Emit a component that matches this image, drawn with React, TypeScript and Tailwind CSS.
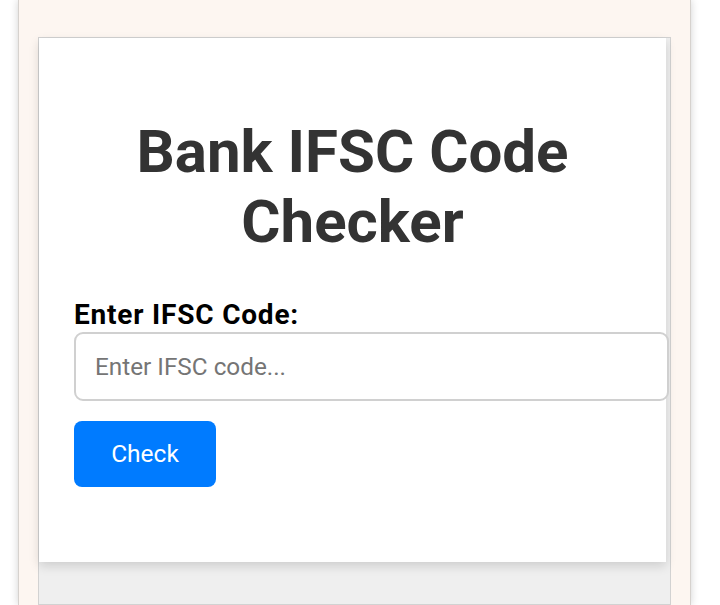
import { useState } from 'react';

export default function App() {
  const [code, setCode] = useState('');

  return (
    <div className="min-h-[605px] bg-white pl-[18px] font-['Roboto','Liberation_Sans',sans-serif]">
      <div className="flex min-h-[605px] w-[673px] flex-col border-x border-[#d6d2ce] bg-[#fdf6f1] pl-[19px] pt-[37px] shadow-[0_0_8px_rgba(0,0,0,0.18)]">
        <div className="flex-1 w-[633px] border border-[#d2d2d2] bg-[#efefef]">
          <div className="w-[627px] bg-white px-[35px] pt-[79px] pb-[75px] shadow-[0_4px_10px_rgba(0,0,0,0.14)]">
            <h1 className="text-center text-[60px] font-bold leading-[70px] text-[#333333]">
              Bank IFSC Code Checker
            </h1>
            <label className="mt-[43px] block text-[28px] font-bold leading-[30px] tracking-[0.8px] text-black">
              Enter IFSC Code:
            </label>
            <input
              value={code}
              onChange={(e) => setCode(e.target.value)}
              placeholder="Enter IFSC code..."
              className="mt-[2px] block h-[69px] w-[595px] rounded-[9px] border-2 border-[#d0d0d0] bg-white pl-[19px] pr-[20px] text-[24.3px] text-[#333] outline-none placeholder:text-[#757575]"
            />
            <button className="mt-[20px] block h-[66px] w-[142px] rounded-[8px] bg-[#007bff] text-[24.5px] text-white">
              Check
            </button>
          </div>
        </div>
      </div>
    </div>
  );
}
